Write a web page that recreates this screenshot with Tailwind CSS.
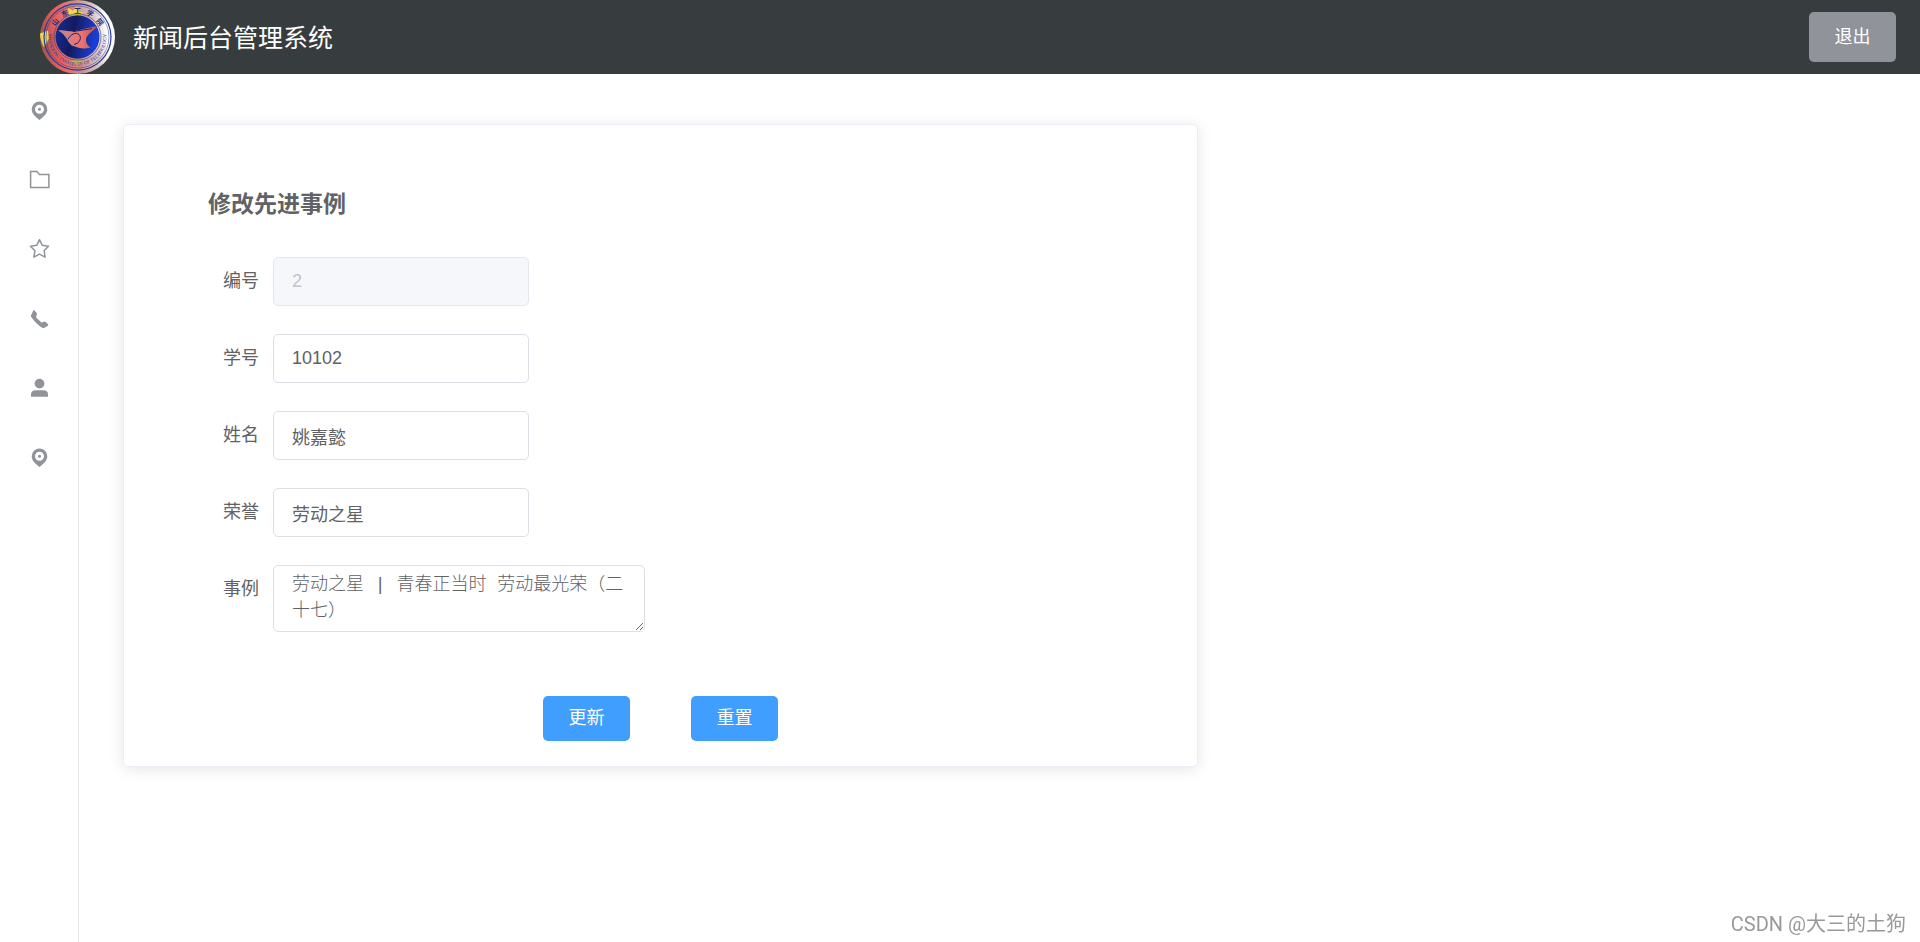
<!DOCTYPE html>
<html lang="zh-CN">
<head>
  <meta charset="UTF-8" />
  <meta name="viewport" content="width=device-width, initial-scale=1.0" />
  <title>新闻后台管理系统</title>
  <script src="https://cdn.jsdelivr.net/npm/@tailwindcss/browser@4"></script>
</head>
<body class="min-h-screen flex flex-col bg-white text-[#606266] font-['Liberation_Sans','Noto_Sans_CJK_SC',sans-serif]">

  <!-- Header -->
  <header class="h-[74px] bg-[#373d3f] flex items-center justify-between pl-10 pr-6">
    <div class="flex items-center gap-[18px]">
      <svg class="w-[75px] h-[74px]" viewBox="0 0 75 75" preserveAspectRatio="none" aria-label="校徽">
        <defs>
          <linearGradient id="ring" x1="0" y1="0.1" x2="1" y2="0">
            <stop offset="0" stop-color="#a8574f" />
            <stop offset="0.2" stop-color="#ee5f5b" />
            <stop offset="0.45" stop-color="#c98a86" />
            <stop offset="0.7" stop-color="#dcc5c4" />
            <stop offset="0.85" stop-color="#ffffff" />
            <stop offset="1" stop-color="#f4f4f6" />
          </linearGradient>
          <linearGradient id="core" x1="0" y1="0" x2="1" y2="0.2">
            <stop offset="0" stop-color="#14309c" />
            <stop offset="0.45" stop-color="#141a60" />
            <stop offset="1" stop-color="#1840d8" />
          </linearGradient>
          <linearGradient id="bird" x1="0" y1="0" x2="1" y2="0">
            <stop offset="0" stop-color="#b98a92" />
            <stop offset="0.6" stop-color="#f0726a" />
            <stop offset="1" stop-color="#a8505c" />
          </linearGradient>
          <path id="arc-bottom" d="M9.500 30a29 29 0 1 0 56 0" />
        </defs>
        <circle cx="37.500" cy="37.500" r="37.500" fill="url(#ring)" />
        <path d="M0 34l8-3 1 8-5 9c-2-4-4-9-4-14z" fill="#e6dc4e" />
        <path d="M28 8l5 3 4-5 2 6 5 1-6 4-9-2z" fill="#f2dc3c" />
        <path d="M29 62l9-2 6 3-7 3z" fill="#c9b83c" />
        <circle cx="37.500" cy="37.500" r="33.500" fill="none" stroke="#2a3a94" stroke-width="1.200" />
        <circle cx="37.500" cy="37.500" r="31.500" fill="none" stroke="#2a3a94" stroke-width="0.500" />
        <circle cx="37.500" cy="37.500" r="23.500" fill="none" stroke="#2a3a94" stroke-width="0.600" />
        <circle cx="37.500" cy="37.500" r="22" fill="url(#core)" />
        <!-- bird -->
        <path d="M18 31c6-1 10 1 15 1L58 26c-4 5-12 9-12 14 0 4 2 7 5 8-5 2-13 1-17-1-5-1-6-7-9-10-2-3-4-4-7-6z" fill="url(#bird)" />
        <path d="M28 40c2-5 8-8 11-5s1 9-5 10M33 32l19-3" fill="none" stroke="#17206e" stroke-width="1" />
        <!-- characters on the upper ring -->
        <g class="text-[7px] font-bold font-['Noto_Sans_CJK_SC',sans-serif]" fill="#1c2a80" text-anchor="middle">
          <text transform="translate(17 24) rotate(-50)">山</text>
          <text transform="translate(26 16) rotate(-25)">东</text>
          <text transform="translate(37.500 13)">工</text>
          <text transform="translate(49 16) rotate(25)">学</text>
          <text transform="translate(58 24) rotate(50)">院</text>
        </g>
        <text class="text-[5px] font-['Liberation_Serif',serif]" fill="#2a3a94">
          <textPath href="#arc-bottom" startOffset="50%" text-anchor="middle">SHANDONG INSTITUTE OF TECHNOLOGY</textPath>
        </text>
      </svg>
      <h1 class="pt-1 text-[25px] text-white">新闻后台管理系统</h1>
    </div>
    <button type="button" class="w-[87px] h-[50px] rounded-[5px] bg-[#909399] text-[18px] text-white hover:bg-[#a6a9ad]">退出</button>
  </header>

  <div class="flex flex-1">
    <!-- Side menu -->
    <nav class="w-[79px] shrink-0 border-r border-[#e6e6e6] text-[#909399]">
      <a href="#" aria-label="首页" class="flex h-[70px] items-center justify-center">
        <svg class="size-6" viewBox="0 0 24 24" fill="currentColor" fill-rule="evenodd">
          <path d="M12.500 4.500a7.800 7.800 0 0 1 7.800 7.800c0 4.200-3.600 7.600-7.800 10.600-4.200-3-7.800-6.400-7.800-10.600a7.800 7.800 0 0 1 7.800-7.800zm0 3.300a4.500 4.500 0 1 0 0 9 4.500 4.500 0 0 0 0-9zm0 3a1.500 1.500 0 1 1 0 3 1.500 1.500 0 0 1 0-3z" />
        </svg>
      </a>
      <a href="#" aria-label="文件" class="flex h-[70px] items-center justify-center">
        <svg class="size-6" viewBox="0 0 24 24" fill="none" stroke="currentColor" stroke-width="1.500">
          <path d="M3.600 4.600h6.400l2.400 2.900h9.500v12.900H3.600z" />
        </svg>
      </a>
      <a href="#" aria-label="收藏" class="flex h-[70px] items-center justify-center">
        <svg class="size-6" viewBox="0 0 24 24" fill="none" stroke="currentColor" stroke-width="1.500" stroke-linejoin="round">
          <path d="M12.500 2.700l2.800 5.600 6.200 1-4.400 4.400 1 6.400-5.600-2.900-5.600 2.900 1-6.400-4.400-4.400 6.200-1z" />
        </svg>
      </a>
      <a href="#" aria-label="电话" class="flex h-[70px] items-center justify-center">
        <svg class="size-6" viewBox="0 0 24 24" fill="currentColor">
          <path d="M6.700 2.800l3.300 3.400-.9 4.300 5.400 5 3.600-1 3.300 3-1 1.700-4.200 2C11.500 18.500 6.500 13.800 3.700 8.900z" />
        </svg>
      </a>
      <a href="#" aria-label="用户" class="flex h-[70px] items-center justify-center">
        <svg class="size-6" viewBox="0 0 24 24" fill="currentColor">
          <circle cx="12.500" cy="6.600" r="4.900" />
          <path d="M4 19.800v-2.600c0-2.500 2-4 4.300-4h8.400c2.300 0 4.300 1.500 4.300 4v2.600z" />
        </svg>
      </a>
      <a href="#" aria-label="位置" class="flex h-[70px] items-center justify-center">
        <svg class="size-6" viewBox="0 0 24 24" fill="currentColor" fill-rule="evenodd">
          <path d="M12.500 1.500a7.800 7.800 0 0 1 7.800 7.800c0 4.200-3.600 7.600-7.800 10.600-4.200-3-7.800-6.400-7.800-10.600a7.800 7.800 0 0 1 7.800-7.800zm0 3.300a4.500 4.500 0 1 0 0 9 4.500 4.500 0 0 0 0-9zm0 3a1.500 1.500 0 1 1 0 3 1.500 1.500 0 0 1 0-3z" />
        </svg>
      </a>
    </nav>

    <!-- Edit form -->
    <main class="flex-1 pt-[50px] pl-11 pr-6">
      <form class="w-full max-w-[1075px] rounded-[5px] border border-[#ebeef5] bg-white pt-[63px] pb-[25px] text-[18px] shadow-[0_2px_15px_rgba(0,0,0,0.1)]">
        <div class="pl-[84px]">
          <h2 class="mb-[37px] text-[23px] leading-8 font-bold">修改先进事例</h2>

          <div class="mb-7 flex">
            <label for="id" class="w-[65px] pr-[14px] text-right leading-[49px]">编号</label>
            <input id="id" type="text" value="2" disabled class="h-[49px] w-[256px] rounded-[5px] border border-[#e4e7ed] bg-[#f5f7fa] px-[18px] text-[#c0c4cc]" />
          </div>
          <div class="mb-7 flex">
            <label for="sno" class="w-[65px] pr-[14px] text-right leading-[49px]">学号</label>
            <input id="sno" type="text" value="10102" class="h-[49px] w-[256px] rounded-[5px] border border-[#dcdfe6] px-[18px] outline-none focus:border-[#409eff]" />
          </div>
          <div class="mb-7 flex">
            <label for="name" class="w-[65px] pr-[14px] text-right leading-[49px]">姓名</label>
            <input id="name" type="text" value="姚嘉懿" class="h-[49px] w-[256px] rounded-[5px] border border-[#dcdfe6] px-[18px] outline-none focus:border-[#409eff]" />
          </div>
          <div class="mb-7 flex">
            <label for="honor" class="w-[65px] pr-[14px] text-right leading-[49px]">荣誉</label>
            <input id="honor" type="text" value="劳动之星" class="h-[49px] w-[256px] rounded-[5px] border border-[#dcdfe6] px-[18px] outline-none focus:border-[#409eff]" />
          </div>
          <div class="flex">
            <label for="story" class="w-[65px] pr-[14px] text-right leading-[49px]">事例</label>
            <textarea id="story" class="h-[67px] w-[372px] resize rounded-[5px] border border-[#dcdfe6] px-[18px] py-1.5 leading-[26px] font-light font-['Liberation_Mono','Noto_Sans_CJK_SC',monospace] outline-none focus:border-[#409eff]">劳动之星 | 青春正当时 劳动最光荣（二十七）</textarea>
          </div>
        </div>

        <div class="mt-16 flex justify-center gap-[61px] text-white">
          <button type="button" class="h-[45px] w-[87px] rounded-[5px] bg-[#409eff] hover:bg-[#66b1ff]">更新</button>
          <button type="reset" class="h-[45px] w-[87px] rounded-[5px] bg-[#409eff] hover:bg-[#66b1ff]">重置</button>
        </div>
      </form>
    </main>
  </div>

  <div class="fixed right-[14px] bottom-1 text-[20px] leading-7 text-[#999999] font-['Roboto','Noto_Sans_CJK_SC',sans-serif]">CSDN @大三的土狗</div>

</body>
</html>
